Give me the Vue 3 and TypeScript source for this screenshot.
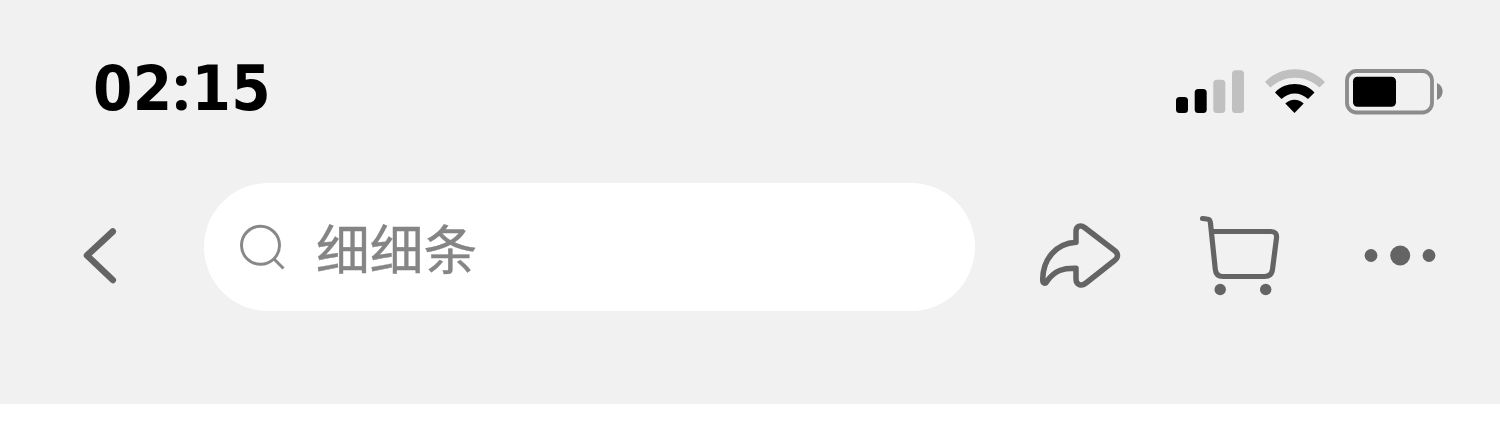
<script setup lang="ts">
import { ref } from 'vue'

interface SignalBar {
  x: number
  y: number
  active: boolean
}

const hours = '02'
const minutes = '15'
const query = ref('细细条')
const baseline = 113
const bars: SignalBar[] = [
  { x: 1176, y: 97, active: true },
  { x: 1194.7, y: 89, active: true },
  { x: 1213.3, y: 79.7, active: false },
  { x: 1232, y: 70.3, active: false },
]
</script>

<template>
  <header class="top">
    <div class="status">
      <time class="clock"><span>{{ hours }}</span><span class="colon">:</span><span class="minutes">{{ minutes }}</span></time>
      <div class="indicators">
        <svg class="signal" viewBox="1176 60 69 60" aria-label="Signal">
          <rect
            v-for="bar in bars"
            :key="bar.x"
            :class="bar.active ? 'on' : 'off'"
            :x="bar.x"
            :y="bar.y"
            width="12"
            :height="baseline - bar.y"
            rx="3.5"
          />
        </svg>
        <svg class="wifi" viewBox="1264 60 62 60" aria-label="Wi-Fi">
          <path class="off" d="M1265 82C1281 65 1309 65 1325 82L1319.500 87.500C1305.500 74.500 1284.500 74.500 1270.500 87.500Z" />
          <path class="on" d="M1275 92.500C1285 81.200 1304.500 81.200 1314.500 92.500L1308 99C1300.500 91.500 1289 91.500 1281.500 99Z" />
          <path class="on" d="M1285.300 103.600C1290 98.400 1299 98.400 1303.700 103.600L1294.500 113Z" />
        </svg>
        <svg class="battery" viewBox="1344 60 100 60" aria-label="Battery">
          <rect class="case" x="1347" y="71" width="85" height="41.500" rx="9.500" />
          <rect class="on" x="1353" y="76.700" width="43" height="30" rx="4.500" />
          <path class="cap" d="M1437 83C1444.500 86 1444.500 97 1437 100Z" />
        </svg>
      </div>
    </div>

    <nav class="nav">
      <svg class="icon back" viewBox="80 183 40 128" aria-label="Back">
        <path d="M112.800 231.500L87 255.500L112.800 280" stroke-width="6.500" />
      </svg>
      <div class="search">
        <svg class="glass" viewBox="238 222 50 50">
          <circle cx="260.500" cy="245.300" r="19" />
          <path d="M274 259L283.500 268.500" />
        </svg>
        <span class="query">{{ query }}</span>
      </div>
      <svg class="icon share" viewBox="1036 183 88 128" aria-label="Share">
        <path d="M1076 242.300V231.500C1076 226.300 1080.500 224.300 1084.500 227.500L1114.500 250.500C1118.500 253.500 1118.500 257.500 1114.500 260.500L1086 283C1081.500 286.500 1076 285 1076 279V268.300C1063 268 1055 270.500 1047.500 280.500C1045.500 284.500 1042.500 284 1042.700 279C1043 259 1056 243.500 1076 242.300Z" stroke-width="5.500" />
      </svg>
      <svg class="icon cart" viewBox="1196 183 88 128" aria-label="Cart">
        <path d="M1202.500 218.500L1207 219Q1210 219.200 1210.400 222.500L1215.300 269.500Q1216 276.500 1223 276.500H1264.500Q1271.300 276.500 1272.400 270L1276.500 238Q1277.200 231.500 1271 231.500H1212" stroke-width="5.200" />
        <circle class="dot" cx="1220.200" cy="289.500" r="5.700" />
        <circle class="dot" cx="1265.700" cy="289.500" r="5.700" />
      </svg>
      <svg class="icon more" viewBox="1360 183 80 128" aria-label="More">
        <circle class="dot" cx="1371" cy="255.500" r="6.400" />
        <circle class="dot" cx="1400.200" cy="255.500" r="10" />
        <circle class="dot" cx="1429" cy="255.500" r="6.400" />
      </svg>
    </nav>
  </header>
</template>

<style>
body {
  background: #fff;
}
</style>

<style scoped>
.top {
  box-sizing: border-box;
  width: 1500px;
  height: 404px;
  background: #f1f1f1;
}
.status {
  box-sizing: border-box;
  display: flex;
  justify-content: space-between;
  align-items: flex-start;
  height: 183px;
  padding: 58px 56px 0 93px;
}
.clock {
  display: flex;
  align-items: baseline;
  color: #000;
  font: bold 63px/56px "DejaVu Sans Condensed", "DejaVu Sans", sans-serif;
  font-stretch: condensed;
  letter-spacing: 0.3px;
}
.colon {
  width: 19px;
  font-family: "Noto Sans", sans-serif;
  font-stretch: normal;
}
.indicators {
  display: flex;
  padding-top: 2px;
}
.indicators svg {
  display: block;
  height: 60px;
}
.signal {
  width: 69px;
}
.wifi {
  width: 62px;
  margin-left: 19px;
}
.battery {
  width: 100px;
  margin-left: 18px;
}
.on {
  fill: #000;
}
.off {
  fill: #c0c0c0;
}
.case {
  fill: none;
  stroke: #8c8c8c;
  stroke-width: 3.8;
}
.cap {
  fill: #858585;
}
.nav {
  display: flex;
  height: 128px;
  padding-left: 80px;
}
.icon {
  flex: none;
  height: 128px;
  fill: none;
  stroke: #646464;
  stroke-linecap: round;
  stroke-linejoin: round;
}
.icon .dot {
  fill: #646464;
  stroke: none;
}
.back {
  width: 40px;
}
.search {
  box-sizing: border-box;
  display: flex;
  align-items: center;
  width: 771px;
  height: 128px;
  margin-left: 84px;
  padding-left: 34px;
  border-radius: 64px;
  background: #fff;
}
.glass {
  width: 50px;
  height: 50px;
  fill: none;
  stroke: #888;
  stroke-width: 3;
}
.query {
  margin-left: 28px;
  color: #858585;
  font: 53.700px/64px "Noto Sans CJK SC", sans-serif;
  -webkit-text-stroke: 0.4px #858585;
}
.share {
  width: 88px;
  margin-left: 61px;
}
.cart {
  width: 88px;
  margin-left: 72px;
}
.more {
  width: 80px;
  margin-left: 76px;
}
</style>
